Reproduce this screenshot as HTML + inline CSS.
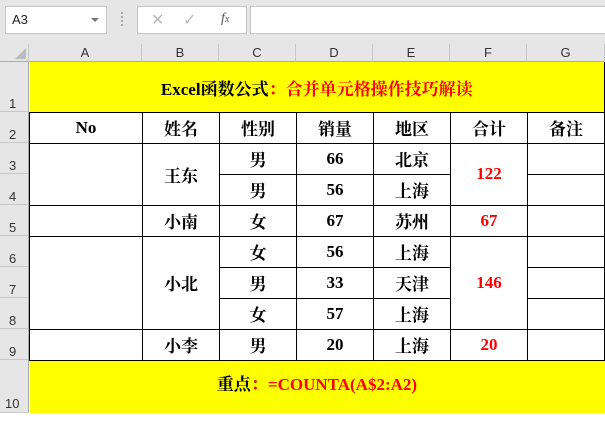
<!DOCTYPE html>
<html><head><meta charset="utf-8"><style>
*{margin:0;padding:0;box-sizing:border-box}
body{width:605px;height:413px;overflow:hidden;background:#fff;position:relative;font-family:"Liberation Sans",sans-serif}
.top{position:absolute;left:0;top:0;width:605px;height:44px;background:#e6e6e6}
.nb{position:absolute;left:5px;top:6px;width:102px;height:28px;background:#fff;border:1px solid #c6c6c6;font-size:13px;line-height:26px;padding-left:6px;color:#222}
.nb:after{content:"";position:absolute;right:7px;top:11px;border-left:4px solid transparent;border-right:4px solid transparent;border-top:4px solid #777}
.dots{position:absolute;left:121px;top:12px;width:2px;height:14px;border-left:2px dotted #aaa}
.fxb{position:absolute;left:137px;top:6px;width:110px;height:28px;background:#fff;border:1px solid #c6c6c6;color:#bbb;font-size:16px}
.fxi{position:absolute;left:250px;top:6px;width:360px;height:28px;background:#fff;border:1px solid #c6c6c6}
.ch{position:absolute;top:44px;height:18px;background:#e6e6e6;border-right:1px solid #c8c8c8;border-bottom:1px solid #ababab;font-size:13px;text-align:center;line-height:18px;color:#333}
.rh{position:absolute;left:0;width:29px;background:#e6e6e6;border-bottom:1px solid #c8c8c8;border-right:1px solid #ababab;font-size:13px;color:#333;padding-left:9px}
table{position:absolute;left:29px;top:62px;border-collapse:collapse;table-layout:fixed;font-family:"Liberation Serif","Noto Serif CJK SC",serif;font-weight:bold;font-size:17px;color:#000}
td{border:1px solid #000;text-align:center;vertical-align:middle;padding:0;overflow:hidden;white-space:nowrap}
.y{background:#ff0;border-top:none;border-left:none}
.r{color:#f00}
</style></head><body>
<div class="top"></div>
<div class="nb">A3</div>
<div class="dots"></div>
<div class="fxb"><span style="position:absolute;left:13px;top:3px">✕</span><span style="position:absolute;left:45px;top:3px">✓</span><span style="position:absolute;left:83px;top:4px;color:#555;font-family:'Liberation Serif',serif;font-style:italic;font-size:14px">f<span style="font-size:10px">x</span></span></div>
<div class="fxi"></div>
<div class="ch" style="left:0;width:29px"><span style="position:absolute;right:2px;bottom:2px;border-left:11px solid transparent;border-bottom:11px solid #bbb"></span></div>
<div class="ch" style="left:29px;width:113px">A</div>
<div class="ch" style="left:142px;width:77px">B</div>
<div class="ch" style="left:219px;width:77px">C</div>
<div class="ch" style="left:296px;width:77px">D</div>
<div class="ch" style="left:373px;width:77px">E</div>
<div class="ch" style="left:450px;width:77px">F</div>
<div class="ch" style="left:527px;width:78px">G</div>
<div class="rh" style="top:62px;height:50px;line-height:84px">1</div>
<div class="rh" style="top:112px;height:31px;line-height:46px">2</div>
<div class="rh" style="top:143px;height:31px;line-height:46px">3</div>
<div class="rh" style="top:174px;height:31px;line-height:46px">4</div>
<div class="rh" style="top:205px;height:31px;line-height:46px">5</div>
<div class="rh" style="top:236px;height:31px;line-height:46px">6</div>
<div class="rh" style="top:267px;height:31px;line-height:46px">7</div>
<div class="rh" style="top:298px;height:31px;line-height:46px">8</div>
<div class="rh" style="top:329px;height:31px;line-height:46px">9</div>
<div class="rh" style="top:360px;height:53px;line-height:88px;padding-left:5px">10</div>
<table>
<colgroup><col style="width:113px"><col style="width:77px"><col style="width:77px"><col style="width:77px"><col style="width:77px"><col style="width:77px"><col style="width:77px"></colgroup>
<tr style="height:50px"><td colspan="7" class="y" style="padding-top:2px">Excel函数公式<span class="r">：合并单元格操作技巧解读</span></td></tr>
<tr style="height:31px"><td>No</td><td>姓名</td><td>性别</td><td>销量</td><td>地区</td><td>合计</td><td>备注</td></tr>
<tr style="height:31px"><td rowspan="2"></td><td rowspan="2">王东</td><td>男</td><td>66</td><td>北京</td><td rowspan="2" class="r">122</td><td></td></tr>
<tr style="height:31px"><td>男</td><td>56</td><td>上海</td><td></td></tr>
<tr style="height:31px"><td></td><td>小南</td><td>女</td><td>67</td><td>苏州</td><td class="r">67</td><td></td></tr>
<tr style="height:31px"><td rowspan="3"></td><td rowspan="3">小北</td><td>女</td><td>56</td><td>上海</td><td rowspan="3" class="r">146</td><td></td></tr>
<tr style="height:31px"><td>男</td><td>33</td><td>天津</td><td></td></tr>
<tr style="height:31px"><td>女</td><td>57</td><td>上海</td><td></td></tr>
<tr style="height:31px"><td></td><td>小李</td><td>男</td><td>20</td><td>上海</td><td class="r">20</td><td></td></tr>
<tr style="height:53px"><td colspan="7" style="background:#ff0;border-bottom:none;border-left:none;border-right:none;padding-bottom:8px">重点<span class="r">：=COUNTA(A$2:A2)</span></td></tr>
</table>
</body></html>
